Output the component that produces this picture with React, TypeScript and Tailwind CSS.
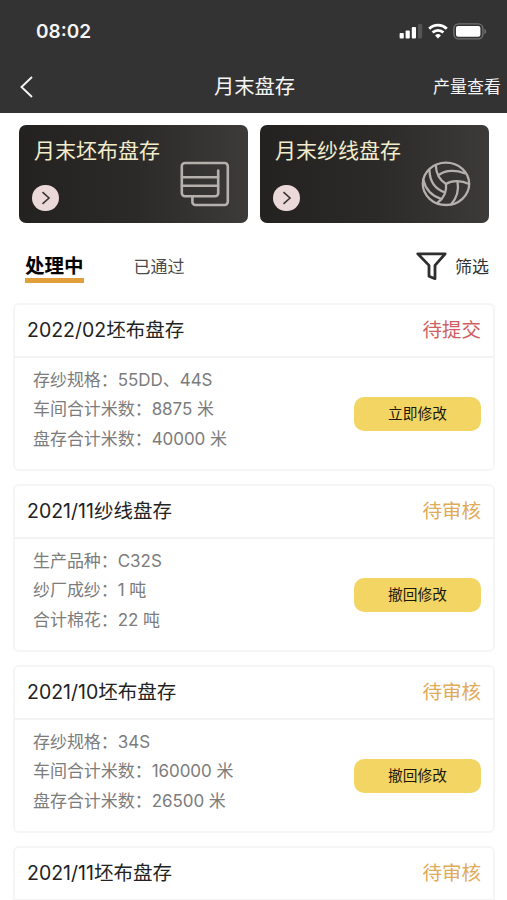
interface BannerProps {
    title: string
    icon: React.ReactNode
}

interface CardProps {
    title: string
    status: string
    statusColor: string
    lines: string[]
    button?: string
}

const cards: CardProps[] = [
    {
        title: "2022/02坯布盘存",
        status: "待提交",
        statusColor: "text-[#cf5f63]",
        lines: ["存纱规格：55DD、44S", "车间合计米数：8875 米", "盘存合计米数：40000 米"],
        button: "立即修改",
    },
    {
        title: "2021/11纱线盘存",
        status: "待审核",
        statusColor: "text-[#e0aa58]",
        lines: ["生产品种：C32S", "纱厂成纱：1 吨", "合计棉花：22 吨"],
        button: "撤回修改",
    },
    {
        title: "2021/10坯布盘存",
        status: "待审核",
        statusColor: "text-[#e0aa58]",
        lines: ["存纱规格：34S", "车间合计米数：160000 米", "盘存合计米数：26500 米"],
        button: "撤回修改",
    },
    {
        title: "2021/11坯布盘存",
        status: "待审核",
        statusColor: "text-[#e0aa58]",
        lines: [],
    },
]

function StatusBar() {
    return (
        <div className="flex h-[62px] items-center justify-between pl-9 pr-[20px]">
            <span className="mt-[2px] text-[19px] font-semibold">08:02</span>
            <div className="flex items-center">
                <svg width="24" height="16" viewBox="0 0 24 16" fill="#fff">
                    <rect x="0.6" y="10" width="4.2" height="5.6" rx="1" />
                    <rect x="6.6" y="7.5" width="4.2" height="8.1" rx="1" />
                    <rect x="12.8" y="4" width="4.2" height="11.6" rx="1" />
                    <rect x="19" y="1" width="4.2" height="14.6" rx="1" fill="#555" />
                </svg>
                <svg className="ml-[5px]" width="20" height="16" viewBox="0 0 20 16" fill="none" stroke="#fff" strokeWidth="2.8">
                    <path d="M1.2 5.7a12.8 12.8 0 0 1 17.6 0" />
                    <path d="M4.6 9.5a7.9 7.9 0 0 1 10.8 0" />
                    <path d="M10 15.4 7.1 12.4a4.3 4.3 0 0 1 5.8 0z" fill="#fff" stroke="none" />
                </svg>
                <svg className="ml-[5px]" width="34" height="17" viewBox="0 0 34 17">
                    <rect x="0.9" y="0.9" width="29" height="15" rx="4.6" fill="none" stroke="#707070" strokeWidth="1.4" />
                    <rect x="3" y="3" width="24.4" height="10.8" rx="2" fill="#fff" />
                    <path d="M31.4 5.7c2.2.8 2.2 4.7 0 5.5z" fill="#707070" />
                </svg>
            </div>
        </div>
    )
}

function FabricIcon() {
    return (
        <svg width="50" height="46" viewBox="0 0 50 46" fill="none" stroke="#b5b0ac" strokeWidth="2.6" strokeLinecap="round">
            <path d="M38.2 9.5v22.7a3 3 0 0 1-3 3H5a3.2 3.2 0 0 1-3.2-3.2V5.2A3.2 3.2 0 0 1 5 2h39.6a3.2 3.2 0 0 1 3.2 3.2v35.6a3.2 3.2 0 0 1-3.2 3.2H15.4a3 3 0 0 1-3-3v-5.6" />
            <path d="M2 16.2h36M2 24.8h36" />
        </svg>
    )
}

function BallIcon() {
    return (
        <svg width="50" height="46" viewBox="0 0 50 46" fill="none" stroke="#b5b0ac" strokeWidth="2.3" strokeLinecap="round">
            <ellipse cx="25" cy="22.8" rx="23.2" ry="21.2" />
            <path d="M14.8 4.2C15 12 18 18.5 25 23" />
            <path d="M18.5 13.5C25 9 35 8.8 43.5 12.2" />
            <path d="M25 23C30 19.5 40 18.8 48 23" />
            <path d="M25 23C26 30 23 37.5 16.5 41.8" />
            <path d="M36.5 20.3C38 29 35.5 37.5 30 43.5" />
            <path d="M8.5 9.5C8.8 20 14 28 24 31.5" />
            <path d="M2.2 18.5C4.5 28 11 35 20 37.8" />
        </svg>
    )
}

function Banner({ title, icon }: BannerProps) {
    return (
        <div className="flex h-[98px] w-[229px] justify-between rounded-[7px] bg-linear-to-r from-[#242221] via-[#2b2a28] to-[#3d3b39] pl-[13px] pr-[18px]">
            <div className="flex flex-col">
                <p className="ml-[2px] mt-[11px] whitespace-nowrap text-[21px] leading-[30px] text-[#f3edcb]">{title}</p>
                <div className="mt-[19px] flex h-[26px] w-[27px] items-center justify-center rounded-full bg-[#ead9d8]">
                    <svg width="10" height="14" viewBox="0 0 10 14" fill="none" stroke="#3b3332" strokeWidth="1.6">
                        <path d="M1.5 1.2 8 7l-6.5 5.8" />
                    </svg>
                </div>
            </div>
            <div className="-ml-6 mt-[36px]">{icon}</div>
        </div>
    )
}

function Card({ title, status, statusColor, lines, button }: CardProps) {
    return (
        <div className="h-[168px] shrink-0 rounded-[6px] border-2 border-[#f5f5f5]">
            <div className="flex h-[53px] items-center justify-between border-b-2 border-[#f3f3f3] pl-3 pr-3 pt-px text-[19.5px]">
                <p className="text-[#222]">{title}</p>
                <p className={statusColor}>{status}</p>
            </div>
            <div className="flex justify-between pl-[18px] pr-3">
                <div className="pt-[8px] text-[17px] leading-[29.3px] tracking-[-0.05px] text-[#7c7c7c]">
                    {lines.map((line) => (
                        <p key={line}>{line}</p>
                    ))}
                </div>
                {button && (
                    <button className="mt-[39px] h-[34px] w-[127px] rounded-[10px] bg-[#f3d564] text-[14.7px] text-[#1c170b]">
                        {button}
                    </button>
                )}
            </div>
        </div>
    )
}

export default function App() {
    return (
        <div className="flex h-[900px] w-[507px] flex-col overflow-hidden bg-white font-['Inter','Noto_Sans_CJK_SC',sans-serif]">
            <header className="h-[113px] shrink-0 bg-[#333] text-[#f5f5f5]">
                <StatusBar />
                <div className="grid h-[50px] grid-cols-[1fr_auto_1fr] items-center pl-5 pr-[6px]">
                    <svg width="13" height="22" viewBox="0 0 13 22" fill="none" stroke="#f5f5f5" strokeWidth="1.9">
                        <path d="M12 1 1.5 11 12 21" />
                    </svg>
                    <h1 className="mr-[12px] mt-px whitespace-nowrap text-[20.3px]">月末盘存</h1>
                    <p className="mt-px text-right text-[17px]">产量查看</p>
                </div>
            </header>
            <div className="mt-[12px] flex shrink-0 justify-between pl-[19px] pr-[18px]">
                <Banner title="月末坯布盘存" icon={<FabricIcon />} />
                <Banner title="月末纱线盘存" icon={<BallIcon />} />
            </div>
            <div className="flex h-[80px] shrink-0 items-start pl-[25px] pr-[18px] pt-[28px]">
                <p className="h-[32px] border-b-[5px] border-[#e2a03c] text-[19.5px] font-bold leading-[30px] text-black">处理中</p>
                <p className="ml-[50px] text-[17px] leading-[32px] text-[#4a4a4a]">已通过</p>
                <svg className="ml-auto mt-px" width="31" height="29" viewBox="0 0 31 29" fill="none" stroke="#2e2e2e" strokeWidth="2.8" strokeLinejoin="round">
                    <path d="M1.8 1.8h27.4L19 13.4v13.3l-6-2.4V13.4z" />
                </svg>
                <p className="ml-2 text-[17px] leading-[32px] text-[#333]">筛选</p>
            </div>
            <div className="flex flex-col gap-[13px] pl-[13px] pr-3">
                {cards.map((card) => (
                    <Card key={card.title} {...card} />
                ))}
            </div>
        </div>
    )
}
